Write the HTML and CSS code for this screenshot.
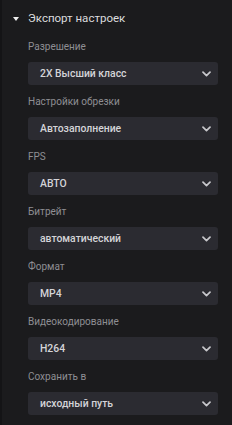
FILE: index.html
```html
<!DOCTYPE html>
<html lang="ru">
<head>
<meta charset="utf-8">
<link rel="stylesheet" href="styles.css">
</head>
<body>
<div class="panel">
  <div class="header">
    <span class="caret"></span>
    <span class="title">Экспорт настроек</span>
  </div>
  <div class="fields">
    <div class="field">
      <div class="label">Разрешение</div>
      <div class="select"><span class="value">2X Высший класс</span><svg class="chev" width="9" height="6" viewBox="0 0 9 6"><path d="M1 1.2 L4.5 4.6 L8 1.2" fill="none" stroke="#c8c8cc" stroke-width="1.7" stroke-linecap="round" stroke-linejoin="round"/></svg></div>
    </div>
    <div class="field">
      <div class="label">Настройки обрезки</div>
      <div class="select"><span class="value">Автозаполнение</span><svg class="chev" width="9" height="6" viewBox="0 0 9 6"><path d="M1 1.2 L4.5 4.6 L8 1.2" fill="none" stroke="#c8c8cc" stroke-width="1.7" stroke-linecap="round" stroke-linejoin="round"/></svg></div>
    </div>
    <div class="field">
      <div class="label">FPS</div>
      <div class="select"><span class="value">АВТО</span><svg class="chev" width="9" height="6" viewBox="0 0 9 6"><path d="M1 1.2 L4.5 4.6 L8 1.2" fill="none" stroke="#c8c8cc" stroke-width="1.7" stroke-linecap="round" stroke-linejoin="round"/></svg></div>
    </div>
    <div class="field">
      <div class="label">Битрейт</div>
      <div class="select"><span class="value">автоматический</span><svg class="chev" width="9" height="6" viewBox="0 0 9 6"><path d="M1 1.2 L4.5 4.6 L8 1.2" fill="none" stroke="#c8c8cc" stroke-width="1.7" stroke-linecap="round" stroke-linejoin="round"/></svg></div>
    </div>
    <div class="field">
      <div class="label">Формат</div>
      <div class="select"><span class="value">MP4</span><svg class="chev" width="9" height="6" viewBox="0 0 9 6"><path d="M1 1.2 L4.5 4.6 L8 1.2" fill="none" stroke="#c8c8cc" stroke-width="1.7" stroke-linecap="round" stroke-linejoin="round"/></svg></div>
    </div>
    <div class="field">
      <div class="label">Видеокодирование</div>
      <div class="select"><span class="value">H264</span><svg class="chev" width="9" height="6" viewBox="0 0 9 6"><path d="M1 1.2 L4.5 4.6 L8 1.2" fill="none" stroke="#c8c8cc" stroke-width="1.7" stroke-linecap="round" stroke-linejoin="round"/></svg></div>
    </div>
    <div class="field">
      <div class="label">Сохранить в</div>
      <div class="select"><span class="value">исходный путь</span><svg class="chev" width="9" height="6" viewBox="0 0 9 6"><path d="M1 1.2 L4.5 4.6 L8 1.2" fill="none" stroke="#c8c8cc" stroke-width="1.7" stroke-linecap="round" stroke-linejoin="round"/></svg></div>
    </div>
  </div>
</div>
</body>
</html>
```
FILE: styles.css
```css
html, body {
  margin: 0;
  padding: 0;
  background: #1b1b1d;
}
body {
  width: 232px;
  height: 425px;
  overflow: hidden;
  font-family: Roboto, "Liberation Sans", Arial, sans-serif;
}
.panel {
  box-sizing: border-box;
  height: 425px;
  border-left: 2px solid #141416;
  padding: 10px 14px 0 11px;
}
.header {
  display: flex;
  align-items: center;
  gap: 10px;
  height: 16px;
}
.caret {
  width: 0;
  height: 0;
  border-left: 3px solid transparent;
  border-right: 3px solid transparent;
  border-top: 4px solid #eeeeee;
  margin-top: 2px;
}
.title {
  color: #dcdcde;
  font-size: 11.5px;
  line-height: 16px;
  margin-left: -1px;
}
.fields {
  display: flex;
  flex-direction: column;
  gap: 9px;
  margin-top: 13px;
  margin-left: 15px;
}
.field {
  display: flex;
  flex-direction: column;
  gap: 7px;
}
.label {
  color: #8e8e93;
  font-size: 10px;
  line-height: 16px;
}
.select {
  height: 23px;
  background: #2b2b31;
  border-radius: 3px;
  display: flex;
  align-items: center;
  justify-content: space-between;
  padding: 0 7px 0 12px;
}
.value {
  color: #d4d4d8;
  font-size: 10.4px;
  font-weight: 500;
}
.chev {
  display: block;
}
```
